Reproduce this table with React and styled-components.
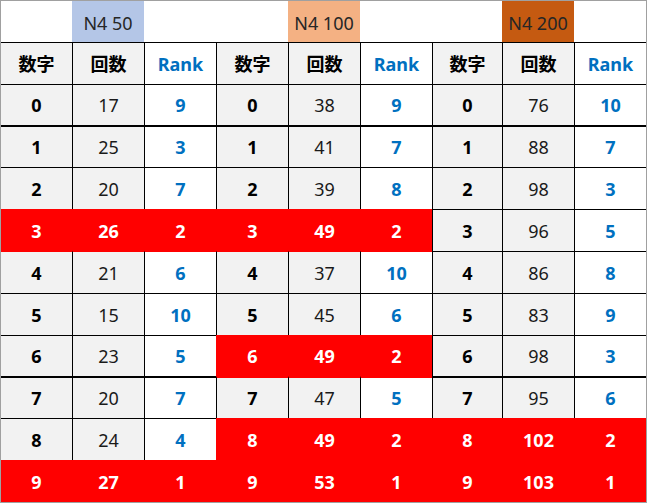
import React from "react";
import styled, { createGlobalStyle } from "styled-components";

const GlobalStyle = createGlobalStyle`
  body {
    margin: 0;
    background: #ffffff;
    font-family: "Noto Sans", "Noto Sans CJK JP", sans-serif;
  }
`;

const BLACK = "#000000";
const RED = "#ff0000";

// counts and ranks for each group (数字 0..9)
const groups = [
  {
    title: "N4 50",
    titleBg: "#b4c6e7",
    counts: [17, 25, 20, 26, 21, 15, 23, 20, 24, 27],
    ranks: [9, 3, 7, 2, 6, 10, 5, 7, 4, 1],
    red: [3, 9],
  },
  {
    title: "N4 100",
    titleBg: "#f4b183",
    counts: [38, 41, 39, 49, 37, 45, 49, 47, 49, 53],
    ranks: [9, 7, 8, 2, 10, 6, 2, 5, 2, 1],
    red: [3, 6, 8, 9],
  },
  {
    title: "N4 200",
    titleBg: "#c55a11",
    counts: [76, 88, 98, 96, 86, 83, 98, 95, 102, 103],
    ranks: [10, 7, 3, 5, 8, 9, 3, 6, 2, 1],
    red: [8, 9],
  },
];

const isRed = (g, r) => r >= 0 && groups[g].red.includes(r);

const App = () => {
  const cells = [];

  // title row
  groups.forEach((g, gi) => {
    cells.push(<TitleCell key={`t${gi}a`} />);
    cells.push(
      <TitleCell key={`t${gi}b`} $bg={g.titleBg}>
        {g.title}
      </TitleCell>
    );
    cells.push(<TitleCell key={`t${gi}c`} />);
  });

  // column headers
  groups.forEach((g, gi) => {
    cells.push(
      <Cell key={`h${gi}a`} $first={gi === 0} $bg="#f2f2f2" $bold>
        数字
      </Cell>
    );
    cells.push(
      <Cell key={`h${gi}b`} $bg="#f2f2f2" $bold>
        回数
      </Cell>
    );
    cells.push(
      <Cell key={`h${gi}c`} $bg="#ffffff" $bold $color="#0070c0">
        Rank
      </Cell>
    );
  });

  // data rows
  for (let r = 0; r < 10; r++) {
    const topW = r === 1 || r === 7 ? 2 : 1;
    groups.forEach((g, gi) => {
      const red = isRed(gi, r);
      const topColor = red ? "transparent" : isRed(gi, r - 1) ? RED : BLACK;
      const leftColor = red ? "transparent" : BLACK;
      const common = { $topW: topW, $topColor: topColor, $leftColor: leftColor };
      cells.push(
        <Cell
          key={`d${r}-${gi}a`}
          {...common}
          $first={gi === 0}
          $bg={red ? RED : "#f2f2f2"}
          $color={red ? "#ffffff" : BLACK}
          $bold
        >
          {r}
        </Cell>
      );
      cells.push(
        <Cell
          key={`d${r}-${gi}b`}
          {...common}
          $bg={red ? RED : "#f2f2f2"}
          $color={red ? "#ffffff" : "#1a1a1a"}
          $bold={red}
        >
          {g.counts[r]}
        </Cell>
      );
      cells.push(
        <Cell
          key={`d${r}-${gi}c`}
          {...common}
          $bg={red ? RED : "#ffffff"}
          $color={red ? "#ffffff" : "#0070c0"}
          $bold
        >
          {g.ranks[r]}
        </Cell>
      );
    });
  }

  return (
    <>
      <GlobalStyle />
      <Sheet>{cells}</Sheet>
    </>
  );
};

export default App;

const Sheet = styled.div`
  display: grid;
  grid-template-columns: 71px repeat(5, 72px) 70px 72px 72px;
  grid-template-rows: 41px 42px 41px 42px 42px 42px 42px 42px 41px 42px 42px 42px;
  width: 645px;
  border: 1px solid #a0a0a0;
  background: #ffffff;
`;

const TitleCell = styled.div`
  display: flex;
  align-items: center;
  justify-content: center;
  padding-top: 2px;
  background: ${(p) => p.$bg || "#ffffff"};
  color: #262626;
  font-size: 18px;
  font-weight: 400;
`;

const Cell = styled.div`
  box-sizing: border-box;
  display: flex;
  align-items: center;
  justify-content: center;
  border-top: ${(p) => p.$topW || 1}px solid ${(p) => p.$topColor || BLACK};
  border-left: ${(p) => (p.$first ? "none" : `1px solid ${p.$leftColor || BLACK}`)};
  background: ${(p) => p.$bg};
  color: ${(p) => p.$color || BLACK};
  font-size: 18px;
  font-weight: ${(p) => (p.$bold ? 700 : 400)};
  line-height: 1;
`;
